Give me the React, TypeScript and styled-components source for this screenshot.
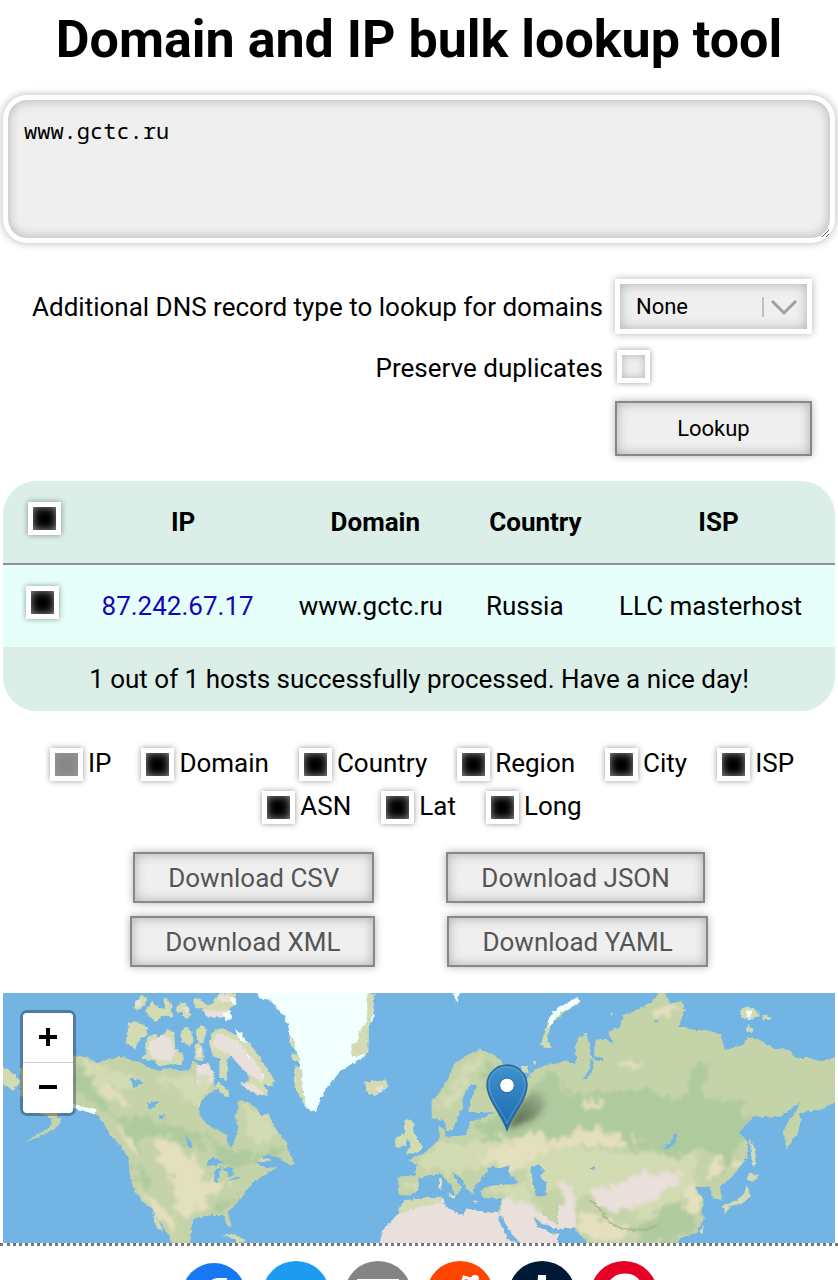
import React from "react";
import styled, { createGlobalStyle } from "styled-components";

const GlobalStyle = createGlobalStyle`
  *, *::before, *::after { box-sizing: border-box; }
  body {
    margin: 0;
    background: #fff;
    color: #000;
    font-family: Roboto, "Liberation Sans", sans-serif;
    font-size: 26px;
    line-height: 32px;
  }
`;

const glow = "0 0 8px rgba(0, 0, 0, 0.3)";
const innerGlow = "inset 0 0 12px rgba(0, 0, 0, 0.27)";

const Main = styled.main`
  padding: 8px 3px 0;
`;

const Title = styled.h1`
  margin: 0 0 23px;
  font-size: 52px;
  line-height: 64px;
  font-weight: 700;
  text-align: center;
`;

const HostsBox = styled.textarea`
  display: block;
  width: 100%;
  height: 148px;
  margin: 0;
  padding: 16px;
  border: 5px solid #fff;
  border-radius: 24px;
  outline: none;
  background: #efefef;
  box-shadow: ${glow}, ${innerGlow};
  color: #000;
  font: 22px/28px "Droid Sans Mono", "Noto Sans Mono", "Liberation Mono", monospace;
  resize: vertical;
`;

const LookupForm = styled.form`
  display: grid;
  grid-template-columns: auto 197px;
  justify-content: center;
  column-gap: 12px;
  margin-top: 36px;
  padding-left: 6px;
`;

const FieldLabel = styled.label`
  align-self: center;
  text-align: right;
`;

const SelectWrap = styled.div`
  position: relative;
  height: 55px;
`;

const RecordSelect = styled.select`
  appearance: none;
  width: 100%;
  height: 100%;
  padding: 0 56px 0 16px;
  border: 5px solid #fff;
  border-radius: 0;
  outline: none;
  background: #efefef;
  box-shadow: ${glow}, ${innerGlow};
  color: #000;
  font: 22px/28px Roboto, "Liberation Sans", sans-serif;
`;

const SelectArrow = styled.svg`
  position: absolute;
  top: 17px;
  right: 14px;
  pointer-events: none;
`;

const CheckCell = styled.div`
  padding: 16px 0 18px 2px;
  line-height: 0;
`;

const Check = styled.input.attrs({ type: "checkbox" })`
  appearance: none;
  flex: none;
  width: 33px;
  height: 33px;
  margin: 0;
  border: 5px solid #fff;
  background: #efefef;
  box-shadow: 0 0 6px rgba(0, 0, 0, 0.4), inset 0 0 8px rgba(0, 0, 0, 0.25);
  vertical-align: middle;

  &:checked {
    background: #000;
    box-shadow: 0 0 6px rgba(0, 0, 0, 0.4), inset 0 0 9px #999;
  }
  &:disabled {
    background: #888;
    box-shadow: 0 0 6px rgba(0, 0, 0, 0.4), inset 0 0 8px #999;
  }
`;

const Button = styled.button<{ $muted?: boolean }>`
  height: ${(p) => (p.$muted ? 51 : 55)}px;
  padding: 0 33px;
  border: 2px solid #888;
  border-radius: 0;
  background: #efefef;
  box-shadow: ${glow}, ${innerGlow};
  color: ${(p) => (p.$muted ? "#555" : "#000")};
  font: ${(p) => (p.$muted ? 26 : 22)}px/30px Roboto, "Liberation Sans", sans-serif;
`;

const LookupButton = styled(Button)`
  grid-column: 2;
`;

const Results = styled.table`
  width: 100%;
  margin-top: 25px;
  border-collapse: separate;
  border-spacing: 0;
  table-layout: fixed;
  border-radius: 34px;
  overflow: hidden;
  background: #dceee8;
`;

const HeadCell = styled.th<{ $width: string }>`
  width: ${(p) => p.$width};
  height: 84px;
  padding: 0;
  border-bottom: 2px solid #879693;
  font-weight: 700;
  text-align: center;
`;

const Cell = styled.td`
  height: 82px;
  padding: 0 0 0 17px;
  background: #e6fffa;
  white-space: nowrap;
`;

const CheckSlot = styled.span`
  display: inline-block;
  padding: 0 4px 8px 6px;
`;

const Summary = styled.td`
  height: 64px;
  padding: 0;
  text-align: center;
`;

const HostLink = styled.a`
  color: #1307b5;
  text-decoration: none;
`;

const Columns = styled.div`
  display: flex;
  flex-wrap: wrap;
  justify-content: center;
  gap: 10px 30px;
  margin-top: 37px;
  padding-left: 6px;
`;

const ColumnToggle = styled.label`
  display: flex;
  gap: 5px;
  height: 33px;
  line-height: 31px;
`;

const Downloads = styled.div`
  display: grid;
  gap: 13px;
  margin: 28px 0 26px;
`;

const DownloadRow = styled.div`
  display: flex;
  justify-content: center;
  gap: 72px;
`;

const MapPanel = styled.section`
  position: relative;
  height: 250px;
  overflow: hidden;
  background: #72b4e4;
`;

const MapDrawing = styled.svg`
  display: block;
  width: 100%;
  height: 100%;
`;

const Zoom = styled.div`
  position: absolute;
  top: 17px;
  left: 17px;
  display: grid;
  width: 56px;
  border: 3px solid rgba(0, 0, 0, 0.3);
  border-radius: 7px;
  background-clip: padding-box;
`;

const ZoomButton = styled.button`
  display: grid;
  place-items: center;
  height: 50px;
  padding: 0 0 2px;
  border: 0;
  background: #fff;
  color: #000;

  &:first-child { border-bottom: 1px solid #ccc; border-radius: 4px 4px 0 0; }
  &:last-child { border-radius: 0 0 4px 4px; }
`;

const Footer = styled.footer`
  display: flex;
  justify-content: center;
  gap: 14px;
  padding: 15px 0;
  border-top: 3px dotted #777;
`;

const Share = styled.a`
  display: block;
  width: 68px;
  height: 68px;

  svg { display: block; }
`;

const WATER = "#72b4e4";
const GREEN = "#c5d3a9";
const FOREST = "#afca9f";
const SAND = "#e4dfbd";
const MEADOW = "#d3dbb3";
const DESERT = "#e9dfdb";
const ICE = "#f1ffff";

const NORTH_AMERICA =
  "M215 212L240 212 270 220 290 235 315 225 345 220 360 212 385 222 410 230 430 238 450 250 480 258 510 248 540 258 570 255 575 230 590 232 600 255 625 235 645 270 640 300 655 310 630 325 605 345 595 375 605 400 630 425 660 440 680 450 688 485 697 488 705 460 716 425 705 395 715 370 712 350 740 348 765 365 785 395 805 385 820 420 838 448 860 470 865 495 885 538 870 540 840 520 800 508 768 535 800 548 832 545 800 568 765 588 735 620 715 650 683 680 695 725 682 725 670 690 620 690 580 702 572 740 570 776 515 776 500 740 480 710 455 670 430 650 405 620 390 580 385 515 360 480 330 450 310 410 285 385 260 375 215 362 190 375 170 392 185 405 170 430 130 450 75 472 150 425 155 400 120 385 80 350 60 330 60 250Z";

const EURASIA =
  "M455 350L480 320 500 290 520 240 560 210 600 195 640 208 670 235 700 245 720 262 705 285 740 285 760 255 800 240 834 235 860 225 880 240 890 225 885 190 895 155 920 150 930 185 935 215 950 165 975 160 1000 180 985 140 1020 125 1030 90 1080 70 1115 50 1135 22 1155 25 1170 55 1205 50 1215 75 1195 125 1245 135 1285 135 1322 150 1335 195 1390 180 1400 155 1440 165 1480 190 1530 195 1545 220 1590 218 1620 230 1668 215 1668 350 1620 375 1575 380 1555 385 1565 410 1555 440 1520 492 1508 440 1530 400 1545 385 1560 350 1530 375 1500 395 1420 395 1375 445 1405 470 1400 520 1360 570 1320 605 1325 645 1300 640 1290 605 1245 605 1255 625 1270 640 1265 680 1275 700 1245 745 1200 760 1190 778 930 778 905 755 885 730 850 725 834 735 810 715 790 720 760 695 770 720 800 745 834 745 834 778 725 778 690 740 655 680 665 640 610 640 600 615 640 600 700 598 715 590 680 560 690 540 660 550 630 545 610 575 600 590 585 600 580 630 560 610 545 580 515 560 530 590 545 610 525 632 515 600 480 565 440 575 415 580 415 615 390 632 355 630 355 575 405 570 410 540 385 525 440 500 460 480 480 460 475 425 490 430 500 455 560 450 570 410 605 400 645 380 590 385 565 380 570 350 590 300 570 300 545 340 550 370 535 390 520 430 500 440 490 405 455 400Z";

function WorldMap() {
  return (
    <MapDrawing viewBox="0 0 2496 750" preserveAspectRatio="xMidYMid slice" role="img" aria-label="World map">
      <defs>
        <filter id="rough" x="-5%" y="-5%" width="110%" height="110%">
          <feTurbulence type="fractalNoise" baseFrequency="0.09" numOctaves="2" seed="4" />
          <feDisplacementMap in="SourceGraphic" scale="12" xChannelSelector="R" yChannelSelector="G" />
          <feGaussianBlur stdDeviation="1" />
        </filter>
        <filter id="ragged" x="-10%" y="-10%" width="120%" height="120%">
          <feTurbulence type="fractalNoise" baseFrequency="0.035" numOctaves="4" seed="9" />
          <feDisplacementMap in="SourceGraphic" scale="60" xChannelSelector="R" yChannelSelector="G" />
          <feGaussianBlur stdDeviation="4" />
        </filter>
        <filter id="shade" x="-40%" y="-40%" width="180%" height="180%">
          <feGaussianBlur stdDeviation="10" />
        </filter>
        <linearGradient id="pin" x1="0" y1="0" x2="0" y2="1">
          <stop offset="0" stopColor="#3f93cd" />
          <stop offset="1" stopColor="#1d68b3" />
        </linearGradient>
        <linearGradient id="cast" x1="0" y1="1" x2="1" y2="0">
          <stop offset="0" stopColor="#303a2a" stopOpacity="0.8" />
          <stop offset="1" stopColor="#303a2a" stopOpacity="0.1" />
        </linearGradient>
        <clipPath id="america"><path d={NORTH_AMERICA} /></clipPath>
        <clipPath id="eurasia"><path d={EURASIA} /></clipPath>
      </defs>
      <rect width="2496" height="750" fill={WATER} />

      {/* North America */}
      <g transform="translate(-9 -24)">
        <g filter="url(#rough)">
          <path d={NORTH_AMERICA} fill={GREEN} />
          <g fill={MEADOW}>
            <path d="M0 240L40 265 62 290 40 318 0 290ZM770 525l30-6 15 5-20 8zM665 752l35-6 42 22-25 8-18-17zM455 680l20 22 15 42-20-18z" />
            <path d="M385 112l30-2 30 18-8 25-22 15-10 25-27-20zM400 70l20-38 22 5-8 25-25 15zM435 80l20-30 20 18 20 3-5-30 20 5 10 50-30-5-25 20zM530 65l15-15 15 5-5 15 12 0 5 22-15 10-12-20-18-2z" />
            <path d="M434 190l5-30 25-12 16 12 20-28 22 8 4 50 24 20-5 30-35-2-30 6-20-18-38-5 20-20zM540 150l15-25 22 15 4 32-12 12-22-15zM588 135l15-15 18 12-10 40-19-2zM582 185l15-15 14 32-2 26-22-2zM627 170l13-35 30-5 25 15 35 15 35 35 30 45 28 45-6 22-24-10 12 35-40-5-43-30 25-10-5-30-45-45-22 15-38-15zM658 225l17-8 10 35-5 35-22-10zM645 300l12-10 32 35-10 12z" />
            <path d="M580 40l18-2 22 22 60-5 14 34-32 8-35-5-22-22-20 0zM640 45l20-20 44-3 6 36-22 12-15-10-30 3z" />
          </g>
          <g fill={DESERT}>
            <path d="M590 240l30-5 22 30-6 30-28 25-20-25zM448 170l42-20 20 10 16 40-15 30-50-10-18-25zM636 180l14-35 60 20 60 70 25 45-10 10-45-25-55-60-30-10zM605 75l60 3 25-5 5 22-70 3zM650 32l45-2 5 20-45 2zM545 68l20-5 0 25zM592 190l12 0 3 25-16 0zM400 62l18-24 10 6-10 20zM720 290l40 10 35 25-15 2-40-15z" />
          </g>
          <path d="M670 85l22-8 5 25-20 5zM705 135l20 10 15 30-20-8zM690 40l18 0 0 20-15-5zM735 205l15 8-5 8zM780 265l10 2 0 12z" fill={ICE} />
        </g>
        <g clipPath="url(#america)">
          <g filter="url(#ragged)">
            <path d="M240 225L320 255 430 280 390 310 300 320 235 270ZM460 275L560 275 640 290 600 360 570 350 530 310ZM730 360L780 380 840 430 800 480 745 450Z" fill={MEADOW} />
            <path d="M220 250L275 260 290 330 350 390 440 400 540 440 590 500 560 480 500 450 430 460 400 520 395 470 350 400 260 340 220 330ZM620 440L680 490 780 510 850 480 850 510 760 530 700 550 650 533ZM640 650L690 650 730 620 690 670 640 680ZM395 540L440 550 450 620 420 590ZM470 400L600 450 620 500 560 460Z" fill={FOREST} />
            <path d="M465 470L520 475 590 530 620 590 690 590 670 620 620 630 620 660 570 690 530 690 530 630 510 560 470 520ZM290 310L340 315 385 355 380 370 340 340ZM240 220L300 240 260 250ZM350 420L390 450 410 510 380 490ZM410 600L460 640 520 700 530 760 480 700Z" fill={SAND} />
          </g>
        </g>
        <g fill={WATER} filter="url(#rough)">
          <path d="M392 280l25 5 15 5-18 12-15 4zM440 355l40-8-12 14-20 14zM478 392l18-4-6 14-12 0zM556 450l16 18 6 24-14-10zM615 540l22-25 32 17-24 12zM643 592l0-34 17-12-6 48zM665 552l30-5 7 24-16 5-5-15zM680 588l20-8 22-8-8 10z" />
        </g>
        <path d="M215 355l40 12 35 8-8 12-30-9-35-10z" fill={ICE} filter="url(#rough)" />
      </g>

      {/* Greenland, Svalbard and Iceland */}
      <g transform="translate(831 -24)" filter="url(#rough)">
        <path d="M-82 10L-60 40-30 45-15 62 10 90 25 120 30 170 45 195 60 240 50 270 60 330 80 370 108 382 120 340 150 295 185 255 255 215 262 195 255 165 265 120 285 95 275 60 270 10Z" fill={ICE} />
        <path d="M30 150l15 20 0 20-12-8zM35 205l25 5 0 22-20-5zM45 240l22 15-2 40 12 65-24-35-12-40zM262 25l22 0-5 60-12 35-2 85-45 10-8-35 20-10 5-30 24-30z" fill={MEADOW} />
        <path d="M515 15L540 15 532 54Z" fill={ICE} />
        <path d="M248 288l18 5 10-8 22 3 18-5 8 20-22 17-18 13-27-13 2-14z" fill={MEADOW} />
        <path d="M284 312l20-10 12 10-15 12z" fill={DESERT} />
      </g>

      {/* Europe, Asia and North Africa */}
      <g transform="translate(831 -24)">
        <g filter="url(#rough)">
          <path d={EURASIA} fill={GREEN} />
          <path d="M372 410l20-8 12 15-5 20 15 25 15 25-15 17-34 2 12-22-5-20-14-15zM345 465l17-18 20 5-5 30-30 8z" fill={MEADOW} />
          <path d="M478 580l9 5-2 30-9-5zM500 626l28 6-5 10zM580 645l22 5-15 4z" fill={SAND} />
          <path d="M298 778L310 735 350 690 370 650 430 640 490 635 495 665 550 690 560 670 620 685 660 680 655 700 690 760 715 778Z" fill={DESERT} />
          <path d="M350 690l25-45 115-10-8 20-65 10-55 20z" fill={MEADOW} />
          <path d="M670 640L700 620 740 640 790 690 834 720 834 660 880 670 890 725 850 728 834 735 795 718 760 695 770 720 820 750 834 745 834 778 725 778 690 740 658 680Z" fill={DESERT} />
        </g>
        <g clipPath="url(#eurasia)">
          <g filter="url(#ragged)">
            <path d="M470 360L520 310 545 250 620 205 560 290 520 370ZM400 540L480 480 560 475 640 440 700 470 650 510 600 560 480 560ZM740 510L850 480 1050 510 1240 480 1240 610 1100 700 920 630 760 610 720 550ZM600 610L740 600 780 680 680 630ZM360 590L430 590 410 630Z" fill={MEADOW} />
            <path d="M620 230L690 260 640 300 600 310ZM590 420L660 390 720 370 810 250 870 330 1000 320 1100 310 1200 350 1240 290 1280 340 1390 350 1400 400 1380 490 1330 570 1300 600 1300 510 1240 490 1180 530 1120 490 1060 500 990 430 890 430 840 480 780 440 700 460 600 460ZM1250 240L1290 230 1260 330 1220 310ZM1110 700L1190 650 1260 690 1240 740 1180 770 1080 770 1080 730Z" fill={FOREST} />
            <path d="M590 520L700 460 790 440 800 480 850 450 940 435 1020 460 1030 490 900 475 830 490 740 520 720 560 650 550ZM910 340L980 350 960 370 900 365ZM1050 430L1080 470 1060 480ZM1300 510L1330 510 1320 570 1280 590ZM1340 560L1380 520 1385 540ZM1220 600L1260 610 1260 680 1215 690ZM910 680L960 700 1050 730 1050 750 950 775 895 735ZM1130 65L1200 60 1200 80 1130 95ZM1030 230L1090 230 1080 245 1030 250Z" fill={SAND} />
            <path d="M1070 570L1200 565 1190 600 1120 635 1060 670 990 680 930 630 990 605ZM840 590L870 600 890 670 890 720 860 700Z" fill={DESERT} />
          </g>
          <path d="M926 645q30 16 50 50t70 38l50 2 36-14" fill="none" stroke="#a4b78c" strokeWidth="7" opacity="0.8" filter="url(#rough)" />
        </g>
        <g fill={WATER} filter="url(#rough)">
          <path d="M612 595l15-45 20-5 15 15 27-20-4 20 24 27-10 10-30-3-30 8zM752 545l30-5 10 22-15 10 22 20-2 40-29 2-12-57zM655 704l14 2 34 69-20-15zM1148 492l24-18 12-32 10 8-12 27-20 16zM930 552l18-14-5 16zM1120 108l14-5-2 12zM590 598l30-12-4 10z" />
          <path d="M924 160l10 50-4 40-22 34 10 0 20-26 6-48-8-52zM934 218l34 0 4 18-6-10-30-2z" />
        </g>
        <g filter="url(#rough)">
          <path d="M780 180l15-35 10-40 30-35 55-30 12 10-35 22-45 35-15 30-5 25 13 27-20 0z" fill={MEADOW} />
          <path d="M802 105l28-35 62-34 8 14-60 34-35 45z" fill={ICE} />
          <path d="M1380 72l18-6 32 8 7 20-22 8-28-3zM1447 88l27 7-3 12-24-6zM1403 120l19 12-10 10-14-8z" fill={MEADOW} />
          <path d="M1400 72l14 5-4 24-8-2z" fill={ICE} />
          <path d="M1408 460l16 30 5 50-12 7-5-52zM1408 563l29 7-15 20-22-6zM1400 600l13 35-26 20-37 8-12 20-12-18 44-19 22-20zM1260 735l8-14 5 15-8 14z" fill={MEADOW} />
          <path d="M725 243l18 0 0 17-15 5zM758 228l10 0-2 14zM990 87l7 0-2 10zM910 142l12 0-4 12z" fill={MEADOW} />
        </g>
      </g>

      {/* Located host */}
      <g>
        <path d="M1514 408L1556 320Q1600 280 1620 312T1590 380Z" fill="url(#cast)" filter="url(#shade)" />
        <path d="M1512 411C1500 370 1452 320 1452 276A60 60 0 0 1 1572 276C1572 320 1524 370 1512 411Z" fill="url(#pin)" stroke="#2a6591" strokeWidth="4" />
        <path d="M1512 392C1502 360 1458 315 1458 276A54 54 0 0 1 1566 276C1566 315 1522 360 1512 392Z" fill="none" stroke="#6aaedb" strokeWidth="3" opacity="0.6" />
        <circle cx="1512" cy="277" r="22" fill="#fff" stroke="#2a6591" strokeWidth="3" />
      </g>
    </MapDrawing>
  );
}

const columnNames = ["IP", "Domain", "Country", "Region", "City", "ISP", "ASN", "Lat", "Long"];
const downloadRows = [["CSV", "JSON"], ["XML", "YAML"]];
const heads: [string, string][] = [["IP", "23.7%"], ["Domain", "22.5%"], ["Country", "16%"], ["ISP", "28%"]];

const shares = [
  { name: "Facebook", color: "#1877f2", r: 32, mark: <path d="M44 17h-5c-8 0-11 4-11 11v5h-7v8h7v22h9V41h7l2-8h-9v-4c0-3 1-4 4-4h5l1-8z" fill="#fff" /> },
  { name: "Twitter", color: "#1d9bf0", r: 34, mark: <path d="M54 22l-5 2c-5-7-16-3-15 5-8 0-14-4-18-9-3 5-1 10 3 13l-4-1c0 5 3 8 7 10h-4c1 4 4 6 8 6-3 3-7 4-12 4 17 10 36 0 36-20l4-6-5 1c3-1 4-3 5-5z" fill="#fff" /> },
  { name: "Email", color: "#848484", r: 34, mark: <path d="M15 20h38v31H15zM15 22l19 17 19-17" fill="none" stroke="#fff" strokeWidth="4" /> },
  { name: "Reddit", color: "#ff4500", r: 34, mark: <g fill="#fff"><path d="M34 30l4-14 10 3" fill="none" stroke="#fff" strokeWidth="3" /><circle cx="49" cy="18" r="4" /><ellipse cx="34" cy="41" rx="19" ry="12" /><circle cx="27" cy="38" r="3" fill="#ff4500" /><circle cx="41" cy="38" r="3" fill="#ff4500" /><path d="M27 45q7 5 14 0" fill="none" stroke="#ff4500" strokeWidth="2" /></g> },
  { name: "Tumblr", color: "#001935", r: 34, mark: <path d="M30 14h8v12h9v8h-9v11c0 5 5 5 9 3v8c-9 4-18 1-18-9V34h-6v-6c5-2 7-6 7-14z" fill="#fff" /> },
  { name: "Pinterest", color: "#e60023", r: 34, mark: <path d="M24 61l6-25M24 42c-10-15 0-26 11-26 13 0 17 12 13 22-4 9-15 10-17 3" fill="none" stroke="#fff" strokeWidth="7" /> },
];

export default function App() {
  return (
    <>
      <GlobalStyle />
      <Main>
        <Title>Domain and IP bulk lookup tool</Title>
        <HostsBox aria-label="Hosts to look up" defaultValue="www.gctc.ru" spellCheck={false} />
        <LookupForm onSubmit={(e) => e.preventDefault()}>
          <FieldLabel htmlFor="record">Additional DNS record type to lookup for domains</FieldLabel>
          <SelectWrap>
            <RecordSelect id="record" defaultValue="None">
              <option>None</option>
              <option>MX</option>
              <option>NS</option>
              <option>TXT</option>
            </RecordSelect>
            <SelectArrow width="37" height="22" viewBox="0 0 37 22" fill="none" aria-hidden="true">
              <path d="M2 1v20" stroke="#c0c0c0" strokeWidth="2" />
              <path d="M11 5l12 12 12-12" stroke="#a0a0a0" strokeWidth="3" />
            </SelectArrow>
          </SelectWrap>
          <FieldLabel htmlFor="dupes">Preserve duplicates</FieldLabel>
          <CheckCell><Check id="dupes" /></CheckCell>
          <LookupButton type="submit">Lookup</LookupButton>
        </LookupForm>

        <Results>
          <thead>
            <tr>
              <HeadCell $width="9.8%"><CheckSlot><Check defaultChecked aria-label="Select all hosts" /></CheckSlot></HeadCell>
              {heads.map(([name, width]) => <HeadCell key={name} $width={width}>{name}</HeadCell>)}
            </tr>
          </thead>
          <tbody>
            <tr>
              <Cell><CheckSlot><Check defaultChecked aria-label="Select 87.242.67.17" /></CheckSlot></Cell>
              <Cell><HostLink href="#87.242.67.17">87.242.67.17</HostLink></Cell>
              <Cell>www.gctc.ru</Cell>
              <Cell>Russia</Cell>
              <Cell>LLC masterhost</Cell>
            </tr>
          </tbody>
          <tfoot>
            <tr><Summary colSpan={5}>1 out of 1 hosts successfully processed. Have a nice day!</Summary></tr>
          </tfoot>
        </Results>

        <Columns>
          {columnNames.map((name) => (
            <ColumnToggle key={name}>
              <Check defaultChecked disabled={name === "IP"} />
              {name}
            </ColumnToggle>
          ))}
        </Columns>

        <Downloads>
          {downloadRows.map((row) => (
            <DownloadRow key={row[0]}>
              {row.map((format) => <Button key={format} type="button" $muted>Download {format}</Button>)}
            </DownloadRow>
          ))}
        </Downloads>

        <MapPanel>
          <WorldMap />
          <Zoom>
            <ZoomButton type="button" aria-label="Zoom in">
              <svg width="20" height="20" viewBox="0 0 20 20"><path d="M10 1v18M1 10h18" stroke="#000" strokeWidth="4" /></svg>
            </ZoomButton>
            <ZoomButton type="button" aria-label="Zoom out">
              <svg width="20" height="20" viewBox="0 0 20 20"><path d="M1 10h18" stroke="#000" strokeWidth="4" /></svg>
            </ZoomButton>
          </Zoom>
        </MapPanel>
      </Main>
      <Footer>
        {shares.map((s) => (
          <Share key={s.name} href={"#" + s.name.toLowerCase()} aria-label={s.name}>
            <svg width="68" height="68" viewBox="0 0 68 68">
              <circle cx="34" cy="34" r={s.r} fill={s.color} />
              {s.mark}
            </svg>
          </Share>
        ))}
      </Footer>
    </>
  );
}
